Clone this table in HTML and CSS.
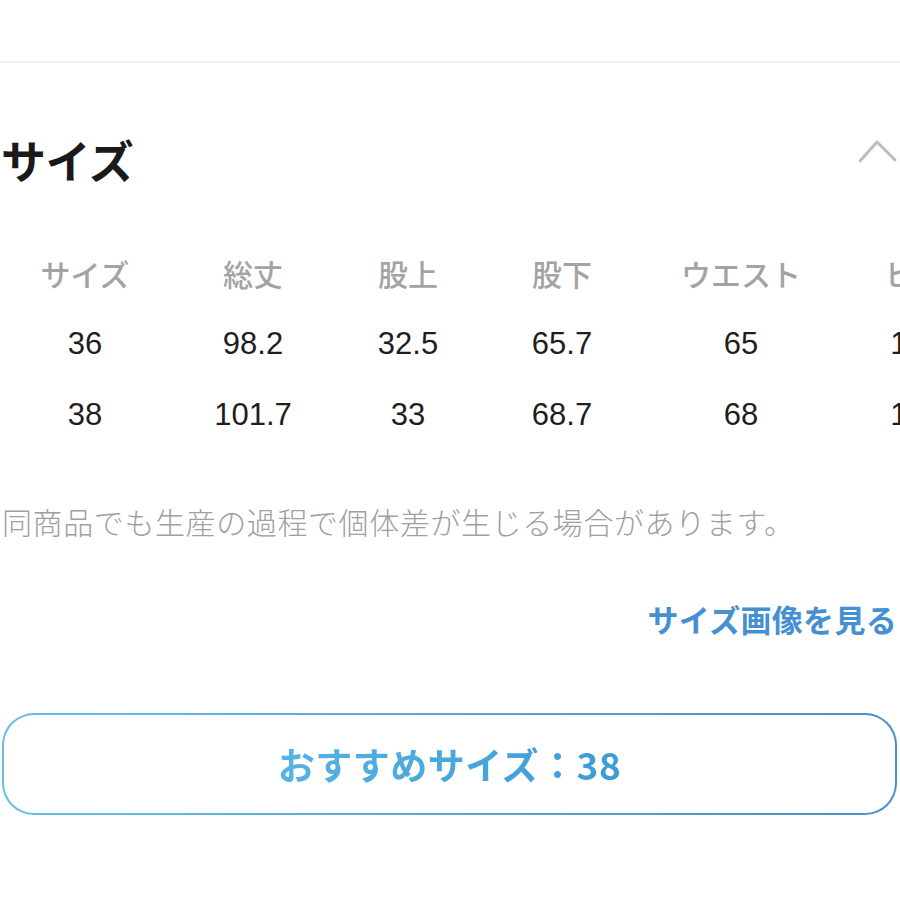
FILE: index.html
```html
<!DOCTYPE html>
<html lang="ja">
<head>
<meta charset="utf-8">
<title>サイズ</title>
<link rel="stylesheet" href="styles.css">
</head>
<body>
<div class="page">
  <div class="divider"></div>
  <div class="title-row">
    <h2 class="title">サイズ</h2>
    <svg class="chevron" width="40" height="26" viewBox="0 0 40 26" aria-hidden="true">
      <polyline points="2,22 19,3 37,21" fill="none" stroke="#bdbdbd" stroke-width="3" stroke-linecap="round" stroke-linejoin="round"/>
    </svg>
  </div>
  <div class="table-wrap">
    <div class="size-table">
      <div class="th">サイズ</div><div class="th">総丈</div><div class="th">股上</div><div class="th">股下</div><div class="th">ウエスト</div><div class="th">ヒップ</div>
      <div class="td">36</div><div class="td">98.2</div><div class="td">32.5</div><div class="td">65.7</div><div class="td">65</div><div class="td">100.5</div>
      <div class="td">38</div><div class="td">101.7</div><div class="td">33</div><div class="td">68.7</div><div class="td">68</div><div class="td">103.5</div>
    </div>
  </div>
  <p class="note">同商品でも生産の過程で個体差が生じる場合があります。</p>
  <div class="link-row"><a class="link">サイズ画像を見る</a></div>
  <div class="reco"><span class="reco-text">おすすめサイズ：38</span></div>
</div>
</body>
</html>
```

FILE: styles.css
```css
html, body {
  margin: 0;
  padding: 0;
  background: #ffffff;
}
body {
  width: 900px;
  height: 900px;
  overflow: hidden;
  font-family: "Noto Sans CJK JP", "Noto Sans", sans-serif;
}
.page {
  width: 900px;
}
.divider {
  margin-top: 61px;
  height: 2px;
  background: #f0f0f0;
}
.title-row {
  margin-top: 75px;
  height: 44px;
  display: flex;
  justify-content: space-between;
  align-items: flex-start;
  padding-left: 1px;
}
.title {
  margin: 0;
  font-size: 45px;
  line-height: 44px;
  font-weight: 700;
  color: #1a1a1a;
  letter-spacing: -0.5px;
}
.chevron {
  display: block;
  margin-top: 1px;
  margin-right: 2px;
}
.table-wrap {
  margin-top: 55px;
  width: 900px;
  overflow: hidden;
}
.size-table {
  display: grid;
  grid-template-columns: 170px 166px 144px 164px 194px 182px;
  grid-auto-rows: 71px;
  width: 1020px;
}
.th, .td {
  display: flex;
  align-items: center;
  justify-content: center;
  white-space: nowrap;
}
.th {
  font-size: 30px;
  font-weight: 500;
  color: #a3a3a3;
}
.td {
  font-family: "Liberation Sans", Arial, sans-serif;
  font-size: 31px;
  color: #1e1e1e;
}
.note {
  margin: 51px 0 0 0;
  padding-left: 2px;
  font-size: 30px;
  line-height: 40px;
  font-weight: 300;
  color: #a0a0a0;
  letter-spacing: 0.6px;
  white-space: nowrap;
}
.link-row {
  margin-top: 58px;
  display: flex;
  justify-content: flex-end;
  padding-right: 3px;
}
.link {
  font-size: 31px;
  line-height: 40px;
  font-weight: 700;
  color: #4590d0;
  letter-spacing: 0.3px;
}
.reco {
  margin: 74px 0 0 2px;
  width: 895px;
  height: 102px;
  box-sizing: border-box;
  border: 2px solid transparent;
  border-radius: 32px;
  background: linear-gradient(#ffffff, #ffffff) padding-box,
              linear-gradient(90deg, #66c0e2, #4c8dcc) border-box;
  display: flex;
  align-items: center;
  justify-content: center;
}
.reco-text {
  font-size: 37px;
  font-weight: 700;
  letter-spacing: 0.5px;
  background: linear-gradient(90deg, #56b3e2, #3e9ad8);
  -webkit-background-clip: text;
  background-clip: text;
  color: transparent;
}
```
